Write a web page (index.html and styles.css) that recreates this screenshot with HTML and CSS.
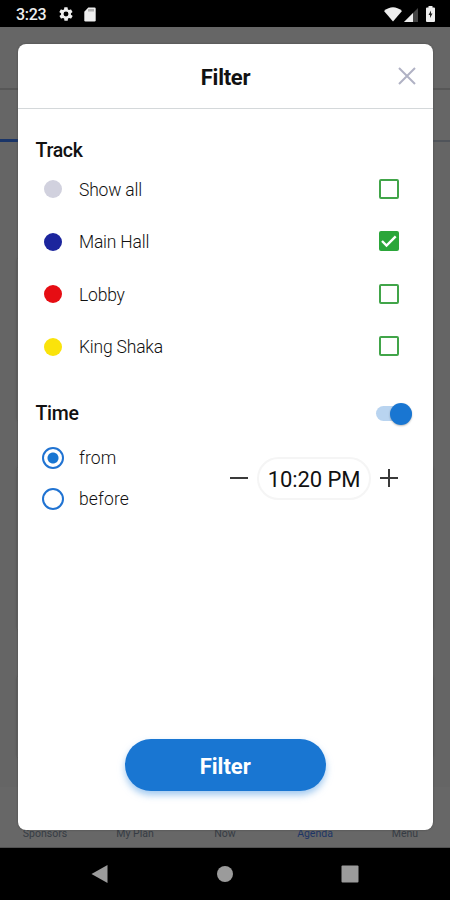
FILE: index.html
```html
<!DOCTYPE html>
<html lang="en">
<head>
<meta charset="utf-8">
<title>Filter</title>
<link rel="stylesheet" href="styles.css">
</head>
<body>
<div class="phone">
  <header class="status">
    <span class="clock">3:23</span>
    <svg class="gear" width="16" height="16" viewBox="0 0 24 24"><path fill="#eee" fill-rule="evenodd" d="M19.4 13a7.500 7.500 0 0 0 0-2l2.100-1.600a.5.5 0 0 0 .1-.7l-2-3.400a.5.5 0 0 0-.6-.2l-2.500 1a7.300 7.300 0 0 0-1.700-1l-.4-2.700a.5.5 0 0 0-.5-.4h-4a.5.5 0 0 0-.5.400l-.4 2.700a7.300 7.300 0 0 0-1.700 1l-2.500-1a.5.5 0 0 0-.6.2l-2 3.400a.5.5 0 0 0 .1.700L4.600 11a7.500 7.500 0 0 0 0 2l-2.100 1.600a.5.5 0 0 0-.1.700l2 3.400c.1.200.4.300.6.2l2.500-1a7.300 7.300 0 0 0 1.700 1l.4 2.700c0 .2.200.4.500.4h4c.3 0 .5-.2.500-.4l.4-2.700a7.300 7.300 0 0 0 1.700-1l2.500 1c.2.100.5 0 .6-.2l2-3.400a.5.5 0 0 0-.1-.7zM12 15.700a3.700 3.700 0 1 1 0-7.400 3.700 3.700 0 0 1 0 7.400z"/></svg>
    <svg class="sd" width="12" height="15" viewBox="0 0 12 15"><path fill="#eee" d="M4.300.5h6.200q1.200 0 1.200 1.200v11.600q0 1.200-1.200 1.200h-9Q.3 14.500.3 13.300V4.700z"/><path stroke="#777" stroke-width="1" d="M5 2v2.500M7 2v2.500M9 2v2.500"/></svg>
    <svg class="wifi" width="18" height="15" viewBox="0 0 18 15"><path fill="#eee" d="M0 4Q9-3.500 18 4L9 14.500z"/></svg>
    <svg class="signal" width="14" height="14" viewBox="0 0 14 14"><path fill="#444" d="M14 0v14H0z"/><path fill="#eee" d="M9 5v9H0z"/></svg>
    <svg class="battery" width="9" height="16" viewBox="0 0 9 16"><path fill="#eee" d="M2.500 0h4v1.500H8q1 0 1 1V15q0 1-1 1H1q-1 0-1-1V2.500q0-1 1-1h1.500z"/><path fill="#222" d="M5 4.500 2.500 9H4v3l2.500-4.500H5z"/></svg>
  </header>
  <main class="app">
    <div class="toolbar"></div>
    <div class="tabs"><div class="tab-on"></div></div>
    <div class="feed"><div class="card"></div><div class="card"></div><div class="card"></div></div>
    <nav class="bottom"><span>Sponsors</span><span>My Plan</span><span>Now</span><span class="active">Agenda</span><span>Menu</span></nav>
    <section class="modal">
      <div class="modal-head">
        <h1>Filter</h1>
        <svg class="close" width="18" height="18" viewBox="0 0 18 18"><path d="M1 1l16 16M17 1L1 17" stroke="#b0b2c4" stroke-width="2"/></svg>
      </div>
      <div class="modal-body">
        <h2>Track</h2>
        <div class="row"><i class="dot grey"></i><span>Show all</span><i class="box"></i></div>
        <div class="row"><i class="dot navy"></i><span>Main Hall</span><i class="box checked"><svg width="20" height="20" viewBox="0 0 20 20"><path d="M3 10l4.500 4.500 9.200-9.200" fill="none" stroke="#fff" stroke-width="2.400"/></svg></i></div>
        <div class="row"><i class="dot red"></i><span>Lobby</span><i class="box"></i></div>
        <div class="row"><i class="dot yellow"></i><span>King Shaka</span><i class="box"></i></div>
        <div class="time-head"><h2>Time</h2><div class="switch"><i class="thumb"></i></div></div>
        <div class="time">
          <div class="radios">
            <div class="option"><i class="radio on"></i><span>from</span></div>
            <div class="option"><i class="radio"></i><span>before</span></div>
          </div>
          <div class="stepper">
            <svg width="18" height="18" viewBox="0 0 18 18"><path d="M0 9h18" stroke="#3a3a3a" stroke-width="2"/></svg>
            <div class="value">10:20 PM</div>
            <svg width="18" height="18" viewBox="0 0 18 18"><path d="M0 9h18M9 0v18" stroke="#3a3a3a" stroke-width="2"/></svg>
          </div>
        </div>
        <button class="apply">Filter</button>
      </div>
    </section>
  </main>
  <footer class="keys">
    <svg width="18" height="18" viewBox="0 0 18 18"><path fill="#9b9b9b" d="M17.500 0v18L1.500 9z"/></svg>
    <svg width="18" height="18" viewBox="0 0 18 18"><circle cx="9" cy="9" r="8" fill="#9b9b9b"/></svg>
    <svg width="18" height="18" viewBox="0 0 18 18"><rect x=".5" y=".5" width="17" height="17" rx="1" fill="#9b9b9b"/></svg>
  </footer>
</div>
</body>
</html>
```
FILE: styles.css
```css
* { box-sizing: border-box; }
body { margin: 0; font-family: Roboto, "Liberation Sans", sans-serif; color: #111; }
h1, h2 { margin: 0; font-weight: 500; }
svg { display: block; flex: none; }
i { display: block; flex: none; }
.phone { width: 450px; height: 900px; display: flex; flex-direction: column; background: #000; overflow: hidden; }
.status { height: 27px; display: flex; align-items: center; padding: 1px 15px 0 16px; color: #eee; }
.clock { font-size: 16px; font-weight: 500; width: 42px; letter-spacing: -0.3px; }
.sd { margin-left: 10px; }
.wifi { margin-left: auto; }
.signal { margin-left: 2px; margin-top: 1px; }
.battery { margin-left: 8px; }
.app { height: 821px; position: relative; display: flex; flex-direction: column; background: #666; }
.toolbar { height: 63px; border-bottom: 2px solid #575757; }
.tabs { height: 52px; border-bottom: 2px solid #50545a; display: flex; align-items: flex-end; }
.tab-on { width: 90px; height: 3px; margin-bottom: -2px; background: #1a3568; }
.feed { flex: 1; display: flex; flex-direction: column; gap: 48px; padding: 117px 17px 0; background: #656565; }
.card { height: 161px; box-shadow: 0 0 2px #505050; background: #666; }
.card:last-child { height: 80px; }
.bottom { height: 61px; display: flex; align-items: flex-end; padding-bottom: 6px; background: #676767; border-bottom: 1px solid #505050; }
.bottom span { flex: 1; text-align: center; font-size: 10.500px; line-height: 14px; color: #363c44; }
.bottom .active { color: #1d3566; }
.modal { position: absolute; left: 18px; top: 17px; width: 415px; height: 786px; border-radius: 8px; background: #fff; box-shadow: 0 0 2px #444; display: flex; flex-direction: column; }
.modal-head { height: 65px; border-bottom: 1px solid #d4d8da; display: grid; grid-template-columns: 1fr auto 1fr; align-items: center; padding: 1px 17px 0; }
.modal-head h1 { grid-column: 2; font-size: 22px; font-weight: 700; line-height: 28px; letter-spacing: -0.3px; padding-top: 2px; }
.close { justify-self: end; margin-top: -1px; }
.modal-body { flex: 1; display: flex; flex-direction: column; padding: 29px 18px 39px 17.500px; }
h2 { font-size: 19.500px; line-height: 25px; letter-spacing: -0.3px; }
.row { height: 52.500px; display: flex; align-items: center; padding: 0 16px 0 8px; font-size: 17.500px; font-weight: 300; letter-spacing: -0.2px; }
.row span { margin-left: 17.500px; padding-top: 1px; }
.dot { width: 18px; height: 18px; border-radius: 50%; }
.grey { background: #d1d1de; }
.navy { background: #1c259d; }
.red { background: #e60d13; }
.yellow { background: #fae30b; }
.box { width: 20px; height: 20px; border: 2px solid #41a549; border-radius: 2px; margin-left: auto; margin-top: -1px; }
.checked { border: 0; background: #2ba63a; }
.time-head { display: flex; align-items: center; justify-content: space-between; margin-top: 27px; height: 26px; padding-right: 3px; }
.time-head h2 { letter-spacing: -0.3px; padding-top: 1px; }
.switch { width: 36px; height: 15px; border-radius: 8px; background: #b9d4f0; display: flex; align-items: center; justify-content: flex-end; margin-top: 1px; }
.thumb { width: 22px; height: 22px; border-radius: 50%; background: #1976d2; box-shadow: 0 1px 2px #0004; }
.time { display: flex; justify-content: space-between; align-items: center; margin-top: 11px; padding: 0 17px 0 6.500px; }
.option { height: 41px; display: flex; align-items: center; gap: 15px; font-size: 17.500px; font-weight: 300; }
.option span { padding-top: 1px; letter-spacing: 0.150px; }
.radio { width: 22px; height: 22px; border: 2px solid #2073d2; border-radius: 50%; }
.on { background: radial-gradient(circle, #1976d2 5px, #fff 6px); }
.stepper { display: flex; align-items: center; gap: 9px; }
.value { width: 114px; height: 43px; border: 2px solid #f5f5f5; border-radius: 22px; text-align: center; font-size: 22px; line-height: 41px; letter-spacing: -0.1px; white-space: nowrap; }
.apply { align-self: center; margin-top: auto; width: 201px; height: 52px; border: 0; border-radius: 26px; background: #1976d2; color: #fff; font: 700 22px/54px Roboto, sans-serif; padding: 1px 0 0; box-shadow: 0 4px 7px #72aee8aa; }
.keys { height: 52px; display: flex; align-items: center; justify-content: space-between; padding: 0 91px 0 90px; }
```
